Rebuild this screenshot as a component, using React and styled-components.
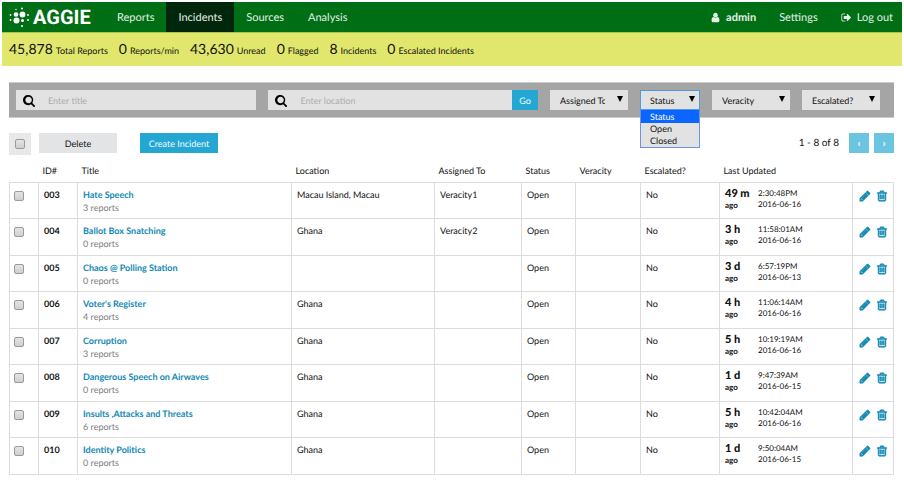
import React from 'react';
import styled, { createGlobalStyle, css } from 'styled-components';

const GlobalStyle = createGlobalStyle`
  * { box-sizing: border-box; }
  body {
    margin: 0;
    background: #fff;
    color: #111;
    font: 9px/13px Lato, "Open Sans", sans-serif;
    text-rendering: geometricPrecision;
  }
  button, input, select { font: inherit; color: inherit; margin: 0; border-radius: 0; text-rendering: inherit; }
`;

const Page = styled.div`
  padding: 2px;
`;

const Nav = styled.nav`
  display: flex;
  align-items: stretch;
  height: 30px;
  background: #006e14;
`;

const Logo = styled.a`
  display: flex;
  align-items: center;
  gap: 3px;
  width: 103px;
  padding-left: 7px;
  color: #fff;
  font: bold 20px/30px Roboto, "Liberation Sans", sans-serif;
  text-decoration: none;
`;

const NavLink = styled.a`
  display: flex;
  align-items: center;
  gap: 5px;
  padding: 1px 12px 0;
  color: #e4f0e4;
  font-size: 11px;
  font-weight: ${(p) => (p.$strong ? 700 : 400)};
  text-decoration: none;
  background: ${(p) => (p.$active ? '#00260b' : 'transparent')};
`;

const Account = styled.div`
  display: flex;
  margin-left: auto;
  padding-right: 9px;
  gap: 23px;

  ${NavLink} { padding: 1px 0 0; }
`;

const Stats = styled.ul`
  display: flex;
  align-items: baseline;
  gap: 11px;
  height: 34px;
  margin: 0;
  padding: 6px 7px 0;
  list-style: none;
  background: #e1e76c;
  border-top: 1px solid #a4c94a;
  line-height: 20px;
`;

const Stat = styled.li`
  white-space: nowrap;

  strong { margin-right: 3px; font-size: 14px; font-weight: 400; }
`;

const Content = styled.main`
  padding: 16px 8px 0 7px;
`;

const Filters = styled.form`
  display: flex;
  align-items: center;
  gap: 12px;
  height: 36px;
  padding: 0 14px 0 7px;
  background: #a5a5a5;
  border: 1px solid #cbcbcb;
  border-width: 1px 0;
`;

const Search = styled.div`
  display: flex;
  flex: ${(p) => p.$grow} 1 0;
  height: 20px;
`;

const SearchField = styled.label`
  display: flex;
  flex: 1;
  align-items: center;
  gap: 12px;
  min-width: 0;
  padding-left: 7px;
  background: #e2e2e2;
  color: #000;

  input {
    flex: 1;
    min-width: 0;
    padding: 0;
    border: 0;
    outline: 0;
    background: transparent;
  }
  input::placeholder { color: #acacac; opacity: 1; }
`;

const Button = styled.button`
  height: 20px;
  width: ${(p) => p.$width}px;
  padding: 0;
  border: 0;
  color: ${(p) => (p.$kind === 'plain' ? '#111' : '#f2fbff')};
  font-size: ${(p) => (p.$kind === 'pager' ? 11 : 9)}px;
  font-weight: ${(p) => (p.$kind === 'pager' ? 700 : 400)};
  background: ${(p) => ({ plain: '#e3e4e6', primary: '#24a8d3', pager: '#6cc5e0' })[p.$kind]};
`;

const Picker = styled.div`
  position: relative;
  width: ${(p) => p.$width}px;
  height: 20px;
  background: #e2e2e2;

  &::after {
    content: '';
    position: absolute;
    top: 6px;
    right: 5px;
    border: 3px solid transparent;
    border-top: 6px solid #000;
    border-bottom: 0;
    pointer-events: none;
  }

  select {
    display: block;
    width: 100%;
    height: 20px;
    padding: 1px 22px 0 9px;
    border: 1px solid ${(p) => (p.$open ? '#4d9be0' : '#e2e2e2')};
    outline: 0;
    appearance: none;
    background: transparent;
  }
`;

const Menu = styled.ul`
  position: absolute;
  z-index: 1;
  top: 100%;
  left: 0;
  right: 0;
  margin: 0;
  padding: 0;
  list-style: none;
  background: #e2e2e2;
  border: 1px solid #6b95d6;
  border-top: 0;
`;

const MenuItem = styled.li`
  padding-left: 9px;
  line-height: 12px;
  ${(p) => p.$selected && css`
    line-height: 13px;
    background: #0a66ff;
    color: #fff;
  `}
`;

const Actions = styled.div`
  display: flex;
  align-items: flex-start;
  margin-top: 15px;
`;

const SelectAll = styled.label`
  display: flex;
  align-items: center;
  justify-content: center;
  width: 22px;
  height: 22px;
  margin-right: 8px;
  background: #e8e8e8;
`;

const Check = styled.input`
  display: block;
  width: 10px;
  height: 10px;
  margin: 0;
  appearance: none;
  border: 1px solid #9a9a9a;
  border-radius: 2px;
  background: linear-gradient(#e4e4e4, #cfcfcf);
`;

const CreateSlot = styled.div`
  margin-left: 23px;
`;

const Pager = styled.div`
  display: flex;
  align-items: center;
  gap: 5px;
  margin-left: auto;

  span { margin-right: 5px; font-size: 10px; line-height: 18px; }
`;

const Table = styled.table`
  width: 100%;
  margin-top: 5px;
  table-layout: fixed;
  border-collapse: collapse;

  th {
    height: 22px;
    padding: 0 0 0 4px;
    text-align: left;
    font-weight: 400;
  }
  td {
    height: 36px;
    padding: 5px 0 0 5px;
    border: 1px solid #dcdcdc;
    vertical-align: top;
  }
  tbody tr:nth-child(even) td { height: 37px; }
  tbody td:first-child { padding-left: 4px; }
`;

const Col = styled.col`
  width: ${(p) => (p.$width ? `${p.$width}px` : 'auto')};
`;

const CheckCell = styled.div`
  padding-top: 3px;
`;

const Title = styled.a`
  display: block;
  color: #1389b3;
  font-weight: 700;
  text-decoration: none;
`;

const Muted = styled.div`
  color: #7c7c7c;
`;

const Updated = styled.div`
  display: grid;
  grid-template-columns: 33px 1fr;
  font-size: 8px;
  line-height: 11px;
`;

const Age = styled.div`
  font-weight: 700;
  line-height: 10px;
  color: #111;

  strong { display: block; font-size: 11px; line-height: 12px; }
`;

const RowActions = styled.div`
  display: flex;
  gap: 5px;
  padding: 2px 0 0 1px;
`;

const IconButton = styled.button`
  display: flex;
  padding: 0;
  border: 0;
  background: none;
  color: #1389b3;

  svg { stroke: currentColor; stroke-width: 90; }
`;

const PATHS = {
  pencil: 'M491 1536l91-91-235-235-91 91v107h128v128h107zM1014 608q0-22-22-22-10 0-17 7l-542 542q-7 7-7 17 0 22 22 22 10 0 17-7l542-542q7-7 7-17zM960 416l416 416-832 832h-416v-416zM1643 512q0 53-37 90l-166 166-416-416 166-165q36-38 90-38 53 0 91 38l235 234q37 39 37 91z',
  trash: 'M704 736v576q0 14-9 23t-23 9h-64q-14 0-23-9t-9-23v-576q0-14 9-23t23-9h64q14 0 23 9t9 23zM960 736v576q0 14-9 23t-23 9h-64q-14 0-23-9t-9-23v-576q0-14 9-23t23-9h64q14 0 23 9t9 23zM1216 736v576q0 14-9 23t-23 9h-64q-14 0-23-9t-9-23v-576q0-14 9-23t23-9h64q14 0 23 9t9 23zM1344 1460v-948h-896v948q0 22 7 40.5t14.5 27 10.5 8.5h832q3 0 10.5-8.5t14.5-27 7-40.5zM672 384h448l-48-117q-7-9-17-11h-317q-10 2-17 11zM1600 416v64q0 14-9 23t-23 9h-96v948q0 83-47 143.5t-113 60.5h-832q-66 0-113-58.5t-47-141.5v-952h-96q-14 0-23-9t-9-23v-64q0-14 9-23t23-9h309l70-167q15-37 54-63t79-26h320q40 0 79 26t54 63l70 167h309q14 0 23 9t9 23z',
  signOut: 'M704 1440q0 4 1 20t.5 26.5-3 23.5-10 19.5-20.5 6.5h-320q-119 0-203.5-84.5t-84.5-203.5v-704q0-119 84.5-203.5t203.5-84.5h320q13 0 22.5 9.5t9.5 22.5q0 4 1 20t.5 26.5-3 23.5-10 19.5-20.5 6.5h-320q-66 0-113 47t-47 113v704q0 66 47 113t113 47h312l11.5 1 11.5 3 8 5.5 7 9 2 13.5zM1632 896q0 26-19 45l-544 544q-19 19-45 19t-45-19-19-45v-288h-448q-26 0-45-19t-19-45v-384q0-26 19-45t45-19h448v-288q0-26 19-45t45-19 45 19l544 544q19 19 19 45z',
  user: 'M1536 1399q0 109-62.5 187t-150.5 78h-854q-88 0-150.5-78t-62.5-187q0-85 8.5-160.5t31.5-152 58.5-131 94-89 134.5-34.5q131 128 313 128t313-128q76 0 134.5 34.5t94 89 58.5 131 31.5 152 8.5 160.5zM1280 512q0 159-112.5 271.5t-271.5 112.5-271.5-112.5-112.5-271.5 112.5-271.5 271.5-112.5 271.5 112.5 112.5 271.5z',
  search: 'M1216 832q0-185-131.5-316.5t-316.5-131.5-316.5 131.5-131.5 316.5 131.5 316.5 316.5 131.5 316.5-131.5 131.5-316.5zM1664 1664q0 52-38 90t-90 38q-54 0-90-38l-343-342q-179 124-399 124-143 0-273.5-55.5t-225-150-150-225-55.5-273.5 55.5-273.5 150-225 225-150 273.5-55.5 273.5 55.5 225 150 150 225 55.5 273.5q0 220-124 399l343 343q37 37 37 90z',
};

const Icon = ({ name, size }) => (
  <svg width={size} height={size} viewBox="0 0 1792 1792" fill="currentColor" aria-hidden="true">
    <path d={PATHS[name]} />
  </svg>
);

const LogoMark = () => (
  <svg width="21" height="22" viewBox="0 0 21 22" fill="#fff" aria-hidden="true">
    <circle cx="7" cy="8.5" r="2.3" />
    <circle cx="13.5" cy="8.5" r="2.9" />
    <circle cx="7.5" cy="14.5" r="3" />
    <circle cx="13.5" cy="14.5" r="1.5" />
    <circle cx="13" cy="2.5" r="1" />
    <circle cx="7" cy="3.5" r=".7" />
    <circle cx="1.5" cy="9" r=".9" />
    <circle cx="1.5" cy="14" r=".9" />
    <circle cx="19" cy="9" r=".9" />
    <circle cx="19" cy="14" r=".9" />
    <circle cx="13" cy="20" r="1" />
  </svg>
);

const STATS = [
  ['45,878', 'Total Reports'],
  ['0', 'Reports/min'],
  ['43,630', 'Unread'],
  ['0', 'Flagged'],
  ['8', 'Incidents'],
  ['0', 'Escalated Incidents'],
];

const COLUMNS = [
  ['', 29], ['ID#', 39], ['Title', 0], ['Location', 143], ['Assigned To', 87],
  ['Status', 54], ['Veracity', 65], ['Escalated?', 79], ['Last Updated', 133], ['', 41],
];

const INCIDENTS = [
  ['003', 'Hate Speech', 3, 'Macau Island, Macau', 'Veracity1', '49 m', '2:30:48PM', '2016-06-16'],
  ['004', 'Ballot Box Snatching', 0, 'Ghana', 'Veracity2', '3 h', '11:58:01AM', '2016-06-16'],
  ['005', 'Chaos @ Polling Station', 0, '', '', '3 d', '6:57:19PM', '2016-06-13'],
  ['006', "Voter's Register", 4, 'Ghana', '', '4 h', '11:06:14AM', '2016-06-16'],
  ['007', 'Corruption', 3, 'Ghana', '', '5 h', '10:19:19AM', '2016-06-16'],
  ['008', 'Dangerous Speech on Airwaves', 0, 'Ghana', '', '1 d', '9:47:39AM', '2016-06-15'],
  ['009', 'Insults ,Attacks and Threats', 6, 'Ghana', '', '5 h', '10:42:04AM', '2016-06-16'],
  ['010', 'Identity Politics', 0, 'Ghana', '', '1 d', '9:50:04AM', '2016-06-15'],
];

const Filter = ({ label, width, options }) => (
  <Picker $width={width} $open={Boolean(options)}>
    <select aria-label={label}>
      {(options || [label]).map((o) => <option key={o}>{o}</option>)}
    </select>
    {options && (
      <Menu role="listbox" aria-label={label}>
        {options.map((o, i) => (
          <MenuItem key={o} role="option" aria-selected={i === 0} $selected={i === 0}>{o}</MenuItem>
        ))}
      </Menu>
    )}
  </Picker>
);

export default function App() {
  return (
    <>
      <GlobalStyle />
      <Page>
        <Nav>
          <Logo href="#"><LogoMark />AGGIE</Logo>
          <NavLink href="#reports">Reports</NavLink>
          <NavLink href="#incidents" $active>Incidents</NavLink>
          <NavLink href="#sources">Sources</NavLink>
          <NavLink href="#analysis">Analysis</NavLink>
          <Account>
            <NavLink href="#account" $strong><Icon name="user" size={11} />admin</NavLink>
            <NavLink href="#settings">Settings</NavLink>
            <NavLink href="#logout"><Icon name="signOut" size={11} />Log out</NavLink>
          </Account>
        </Nav>
        <Stats>
          {STATS.map(([n, label]) => <Stat key={label}><strong>{n}</strong>{label}</Stat>)}
        </Stats>
        <Content>
          <Filters onSubmit={(e) => e.preventDefault()}>
            <Search $grow={240}>
              <SearchField>
                <Icon name="search" size={13} />
                <input type="text" placeholder="Enter title" aria-label="Title" />
              </SearchField>
            </Search>
            <Search $grow={269}>
              <SearchField>
                <Icon name="search" size={13} />
                <input type="text" placeholder="Enter location" aria-label="Location" />
              </SearchField>
              <Button type="submit" $kind="primary" $width={26}>Go</Button>
            </Search>
            <Filter label="Assigned To" width={78} />
            <Filter label="Status" width={60} options={['Status', 'Open', 'Closed']} />
            <Filter label="Veracity" width={78} />
            <Filter label="Escalated?" width={78} />
          </Filters>
          <Actions>
            <SelectAll><Check type="checkbox" aria-label="Select all incidents" /></SelectAll>
            <Button type="button" $kind="plain" $width={78}>Delete</Button>
            <CreateSlot>
              <Button type="button" $kind="primary" $width={78}>Create Incident</Button>
            </CreateSlot>
            <Pager>
              <span>1 - 8 of 8</span>
              <Button type="button" $kind="pager" $width={20} aria-label="Previous page">‹</Button>
              <Button type="button" $kind="pager" $width={20} aria-label="Next page">›</Button>
            </Pager>
          </Actions>
          <Table>
            <colgroup>
              {COLUMNS.map(([, width], i) => <Col key={i} $width={width} />)}
            </colgroup>
            <thead>
              <tr>{COLUMNS.map(([name], i) => <th key={i} scope="col">{name}</th>)}</tr>
            </thead>
            <tbody>
              {INCIDENTS.map(([id, title, reports, location, assignee, age, time, date]) => (
                <tr key={id}>
                  <td><CheckCell><Check type="checkbox" aria-label={`Select ${title}`} /></CheckCell></td>
                  <td><strong>{id}</strong></td>
                  <td>
                    <Title href={`#${id}`}>{title}</Title>
                    <Muted>{reports} reports</Muted>
                  </td>
                  <td>{location}</td>
                  <td>{assignee}</td>
                  <td>Open</td>
                  <td />
                  <td>No</td>
                  <td>
                    <Updated>
                      <Age><strong>{age}</strong>ago</Age>
                      <div>{time}<br />{date}</div>
                    </Updated>
                  </td>
                  <td>
                    <RowActions>
                      <IconButton type="button" aria-label={`Edit ${title}`}><Icon name="pencil" size={12} /></IconButton>
                      <IconButton type="button" aria-label={`Delete ${title}`}><Icon name="trash" size={12} /></IconButton>
                    </RowActions>
                  </td>
                </tr>
              ))}
            </tbody>
          </Table>
        </Content>
      </Page>
    </>
  );
}
